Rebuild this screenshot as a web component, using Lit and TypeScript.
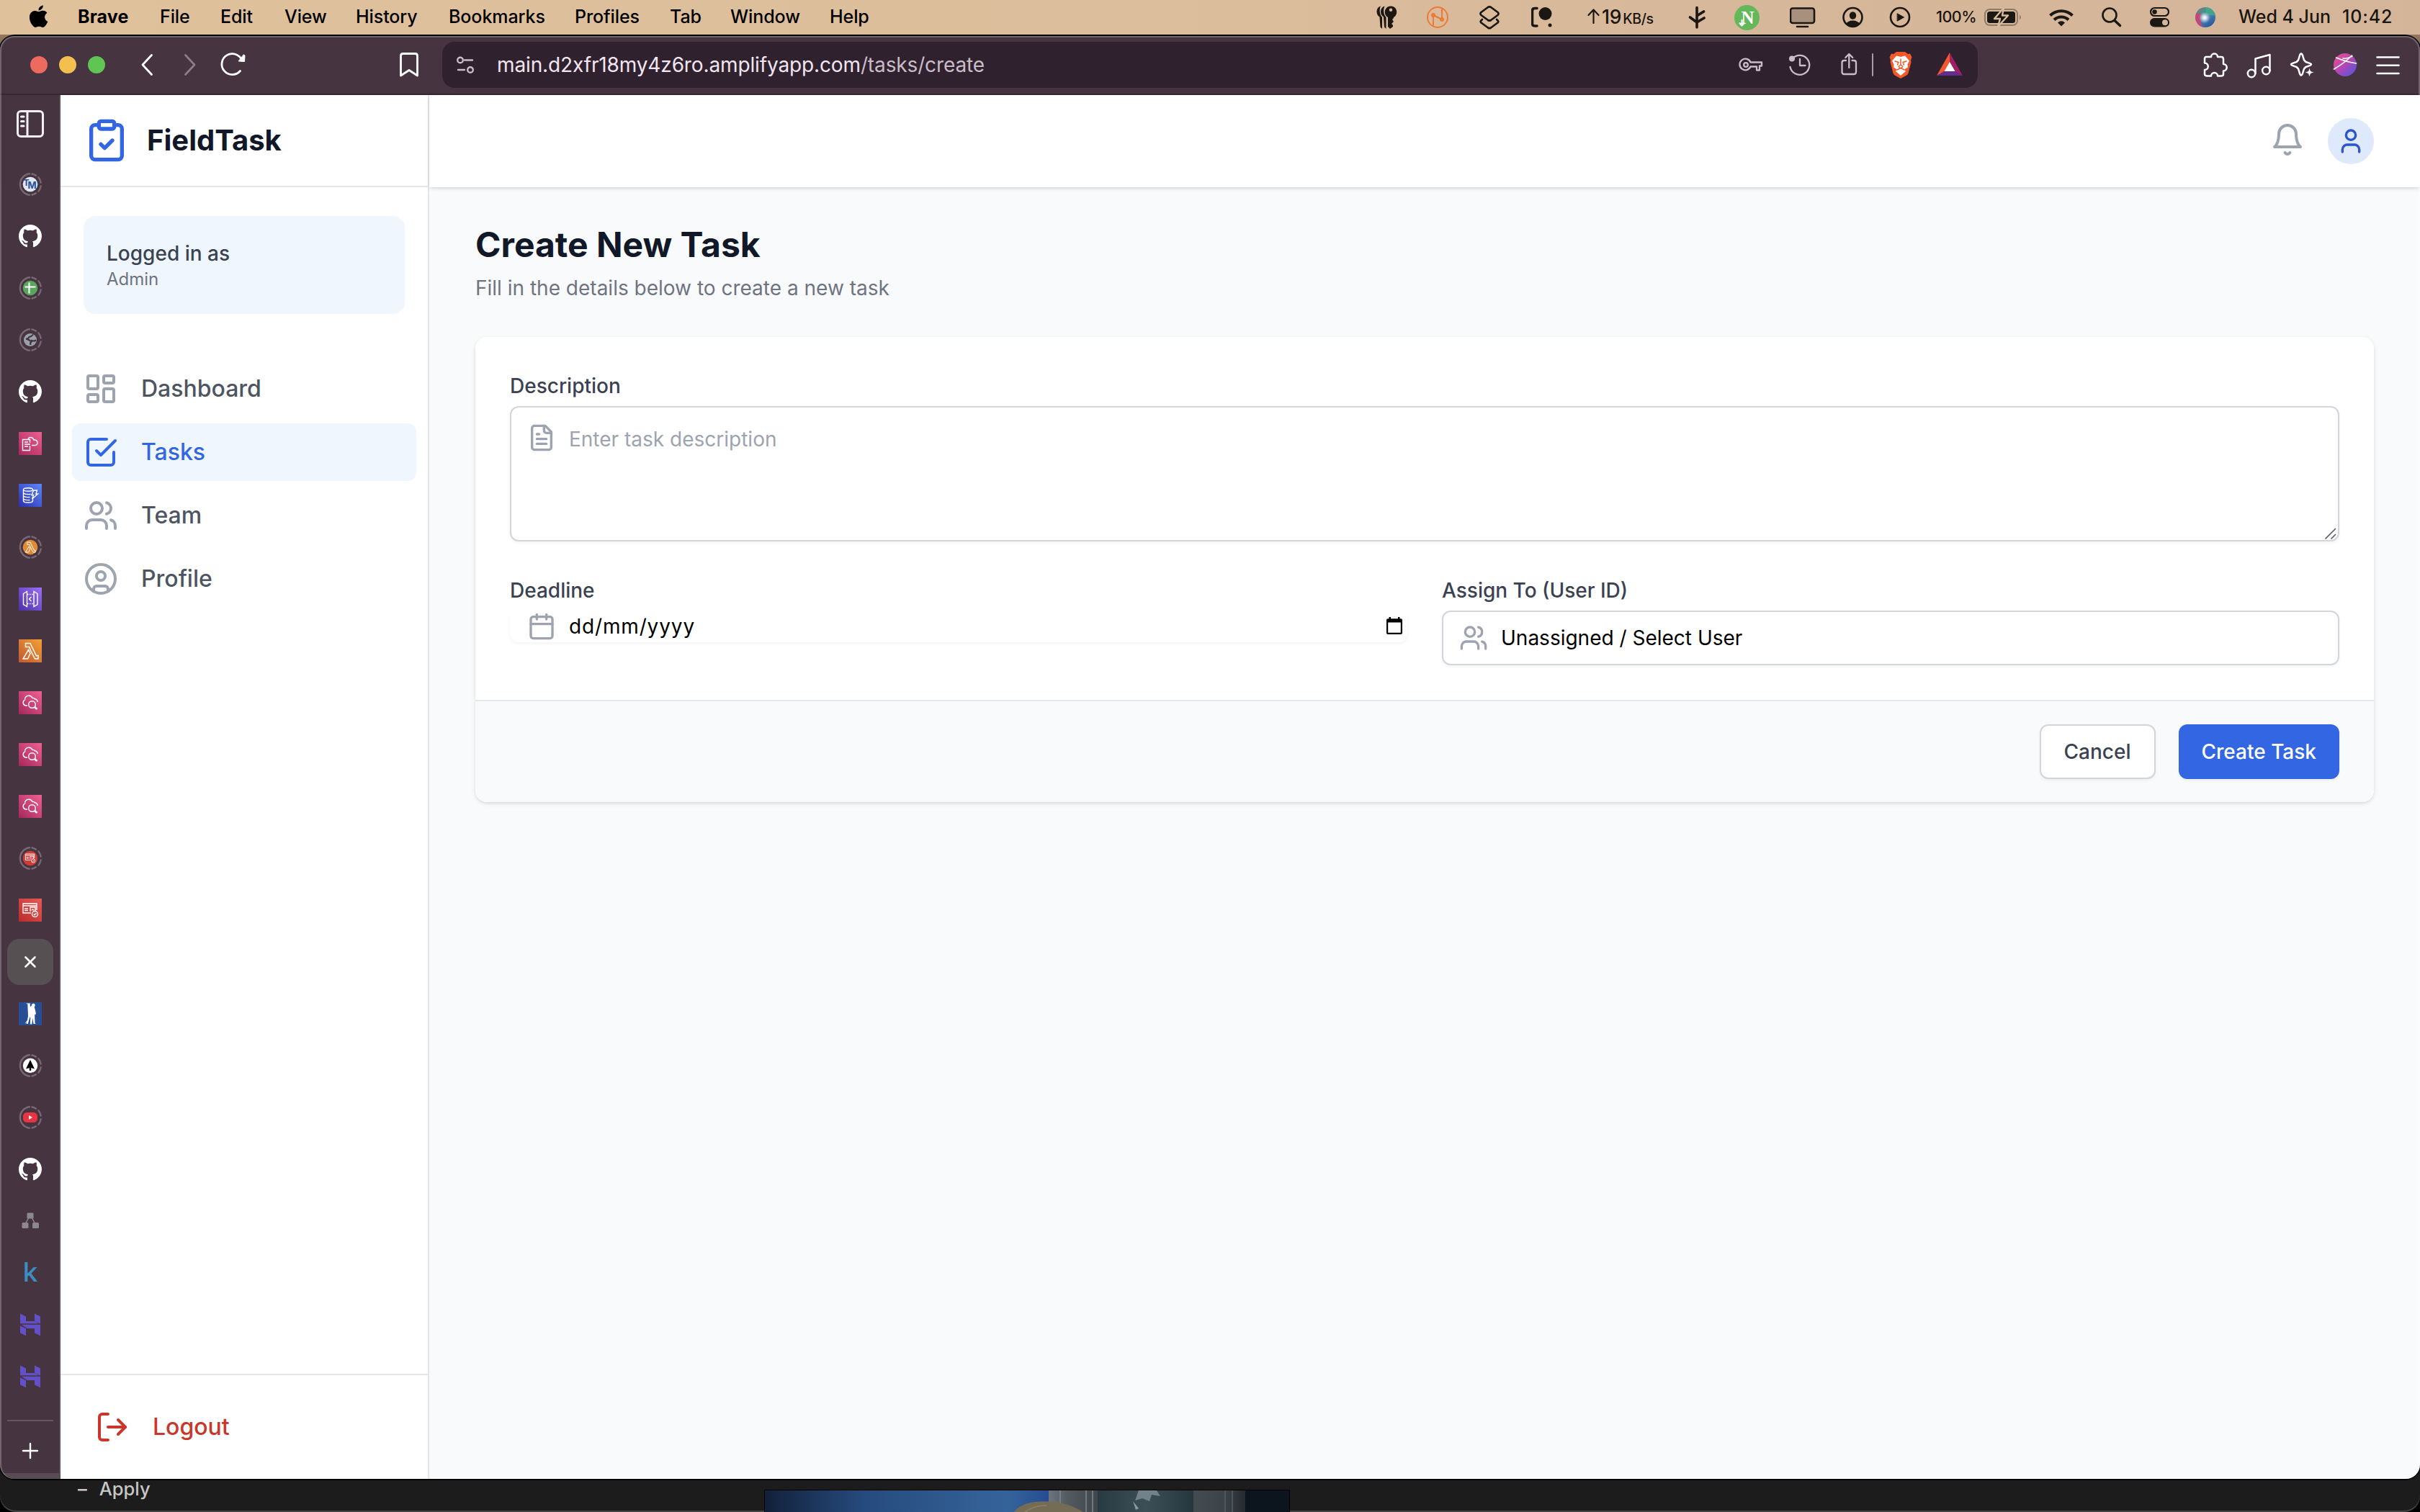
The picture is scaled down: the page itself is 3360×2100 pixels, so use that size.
import { LitElement, html, svg, css, nothing } from "lit";
import { customElement, property } from "lit/decorators.js";

/* ---------- Shared icon paths (24 x 24 outline set) ---------- */

const OUTLINE: Record<string, unknown> = {
  clipboard: svg`<rect width="8" height="4" x="8" y="2" rx="1" ry="1"/><path d="M16 4h2a2 2 0 0 1 2 2v14a2 2 0 0 1-2 2H6a2 2 0 0 1-2-2V6a2 2 0 0 1 2-2h2"/><path d="m9 14 2 2 4-4"/>`,
  dashboard: svg`<rect width="7" height="9" x="3" y="3" rx="1"/><rect width="7" height="5" x="14" y="3" rx="1"/><rect width="7" height="9" x="14" y="12" rx="1"/><rect width="7" height="5" x="3" y="16" rx="1"/>`,
  tasks: svg`<path d="m9 11 3 3L22 4"/><path d="M21 12v7a2 2 0 0 1-2 2H5a2 2 0 0 1-2-2V5a2 2 0 0 1 2-2h11"/>`,
  users: svg`<path d="M16 21v-2a4 4 0 0 0-4-4H6a4 4 0 0 0-4 4v2"/><circle cx="9" cy="7" r="4"/><path d="M22 21v-2a4 4 0 0 0-3-3.87"/><path d="M16 3.13a4 4 0 0 1 0 7.75"/>`,
  profile: svg`<circle cx="12" cy="12" r="10"/><circle cx="12" cy="10" r="3"/><path d="M7 20.662V19a2 2 0 0 1 2-2h6a2 2 0 0 1 2 2v1.662"/>`,
  logout: svg`<path d="M9 21H5a2 2 0 0 1-2-2V5a2 2 0 0 1 2-2h4"/><path d="m16 17 5-5-5-5"/><path d="M21 12H9"/>`,
  bell: svg`<path d="M6 8a6 6 0 0 1 12 0c0 7 3 9 3 9H3s3-2 3-9"/><path d="M10.3 21a1.94 1.94 0 0 0 3.4 0"/>`,
  user: svg`<path d="M19 21v-2a4 4 0 0 0-4-4H9a4 4 0 0 0-4 4v2"/><circle cx="12" cy="7" r="4"/>`,
  file: svg`<path d="M15 2H6a2 2 0 0 0-2 2v16a2 2 0 0 0 2 2h12a2 2 0 0 0 2-2V7Z"/><path d="M14 2v4a2 2 0 0 0 2 2h4"/><path d="M10 9H8"/><path d="M16 13H8"/><path d="M16 17H8"/>`,
  calendar: svg`<path d="M8 2v4"/><path d="M16 2v4"/><rect width="18" height="18" x="3" y="4" rx="2"/><path d="M3 10h18"/>`,
};

@customElement("line-icon")
export class LineIcon extends LitElement {
  @property() name = "";
  static styles = css`
    :host { display: block; flex: none; width: 48px; height: 48px; }
    svg { display: block; width: 100%; height: 100%; }
  `;
  render() {
    return html`<svg viewBox="0 0 24 24" fill="none" stroke="currentColor" stroke-width="2" stroke-linecap="round" stroke-linejoin="round">${OUTLINE[this.name] ?? nothing}</svg>`;
  }
}

/* ---------- macOS menu bar ---------- */

const MENUS = ["File", "Edit", "View", "History", "Bookmarks", "Profiles", "Tab", "Window", "Help"];

const glyph = (x: number, w: number, body: unknown) =>
  html`<svg width=${w} height="48" viewBox="${x} 0 ${w} 48" fill="none" stroke-linecap="round" stroke-linejoin="round">${body}</svg>`;

@customElement("menu-bar")
export class MenuBar extends LitElement {
  static styles = css`
    :host {
      display: flex; height: 48px; justify-content: space-between; overflow: hidden;
      background: linear-gradient(90deg, #dfc19c 0, #dcbe9c 45%, #d6b79a 75%, #d5b599 100%);
      font: 500 25px/46px Inter, "Liberation Sans", sans-serif; color: #1b1510; white-space: pre;
    }
    svg { display: block; }
    .menus, .status { display: grid; align-items: center; height: 48px; }
    .menus { padding-left: 41px; grid-template-columns: 67px 114px 84px 89px 99px 129px 175px 132px 84px 138px auto; color: #000; }
    .menus span { font-weight: 450; letter-spacing: -0.08px; height: 48px; }
    .menus .app { font-weight: 700; letter-spacing: 0.1px; }
    .status { grid-template-columns: 70px 71px 74px 78px 140px 64px 77px 72px 66px 65px 67px 89px 73px 67px 63px 61px 144px 108px; }
    .status span { height: 48px; }
    .net { display: flex; align-items: baseline; }
    .net .unit { font-size: 19.5px; letter-spacing: -0.4px; margin-left: 2px; }
    .net .num { font-size: 26.5px; letter-spacing: -0.2px; }
    .pct { font-size: 21.5px; letter-spacing: -0.5px; }
    .date { letter-spacing: -0.02px; }
    .time { letter-spacing: 0.85px; }
  `;
  render() {
    const k = "#1b1712";
    return html`
      <div class="menus">
        ${glyph(41, 28, svg`<g transform="translate(38 7.5) scale(1.3 1.27)" fill="#000"><path d="M12.152 6.896c-.948 0-2.415-1.078-3.96-1.04-2.04.027-3.91 1.183-4.961 3.014-2.117 3.675-.546 9.103 1.519 12.09 1.013 1.454 2.208 3.09 3.792 3.039 1.52-.065 2.09-.987 3.935-.987 1.831 0 2.35.987 3.96.948 1.637-.026 2.676-1.48 3.676-2.948 1.156-1.688 1.636-3.325 1.662-3.415-.039-.013-3.182-1.221-3.22-4.857-.026-3.04 2.48-4.494 2.597-4.559-1.429-2.09-3.623-2.324-4.39-2.376-2-.156-3.675 1.09-4.61 1.09zM15.53 3.83c.843-1.012 1.4-2.427 1.245-3.83-1.207.052-2.662.805-3.532 1.818-.78.896-1.454 2.338-1.273 3.714 1.338.104 2.715-.688 3.559-1.701"/></g>`)}
        <span class="app">Brave</span>
        ${MENUS.map((m) => html`<span>${m}</span>`)}
      </div>
      <div class="status">
        ${glyph(1911, 30, svg`
          <g fill=${k}>
            <path d="M1917 8.500c-7 2-7 12-1.500 15l1 14 2.500 2.500V24c-4-4-4-11.500-2-15.500z"/>
            <path d="M1922.500 8.500c-7 2-7 12-1.500 15l1 14 2.500 2.500V24c-4-4-4-11.500-2-15.500z"/>
            <path fill-rule="evenodd" d="M1931 8.500c-9 0-11 12-4 15.500v13l3 3 4-3v-2l-2-2 3-3-2-3 2-2v-1c7-4 5-15.500-4-15.500zm0 3a2 2 0 1 1 0 4.500 2 2 0 0 1 0-4.500z"/>
          </g>`)}
        ${glyph(1981, 31, svg`
          <g stroke="#ee7a38" stroke-width="2"><circle cx="1996" cy="24" r="14"/><path d="M1990 21v14M2002 27V13M1990 21l12 6"/></g>
          <circle cx="1990" cy="21" r="3" fill="#ee7a38"/><circle cx="2002" cy="27" r="3" fill="#ee7a38"/>`)}
        ${glyph(2052, 32, svg`<g stroke=${k} stroke-width="2.700"><path d="M2066 10q2-1.300 4 0l9.500 7q2 2 0 4l-9.500 7q-2 1.300-4 0l-9.500-7q-2-2 0-4z"/><path d="M2058 27l-1.500 1.500q-1.500 1.500 0 3l9.500 7q2 1.300 4 0l9.500-7q1.500-1.500 0-3L2078 27"/></g>`)}
        ${glyph(2126, 30, svg`<path d="M2134 11.500h-3q-3.500 0-3.500 3.500v18q0 3 3.500 3h3" stroke=${k} stroke-width="3.500"/><circle cx="2145.500" cy="19" r="9" fill=${k}/><circle cx="2152" cy="35" r="2.500" fill=${k}/>`)}
        <span class="net">
          <svg width="20" height="22" viewBox="0 0 20 22" fill="none" stroke=${k} stroke-width="2.200" stroke-linecap="round" stroke-linejoin="round"><path d="M8.500 21V3M1.500 10l7-7.500 7 7.500"/></svg><span class="num">19</span><span class="unit">KB/s</span>
        </span>
        ${glyph(2344, 26, svg`<path d="M2356 10.500V38M2346.500 24l9.500 7 10-6M2356 22l9.500-6" stroke=${k} stroke-width="3.600"/>`)}
        ${glyph(2408, 36, svg`<circle cx="2425.500" cy="24.500" r="17.500" fill="#64b85a"/><text x="2426.500" y="32.500" text-anchor="middle" font-family="Liberation Serif, serif" font-weight="700" font-size="25" fill="#fff">N</text><path d="M2418.500 28v7m-3-2.800 3 3.300 3-3.300" stroke="#fff" stroke-width="2.200"/>`)}
        ${glyph(2485, 36, svg`<rect x="2486" y="11.500" width="33" height="20.500" rx="3" fill="#a8917c" stroke=${k} stroke-width="2.600"/><path d="M2495 37h15" stroke=${k} stroke-width="2.600"/>`)}
        ${glyph(2557, 32, svg`<circle cx="2572.500" cy="24" r="13" stroke=${k} stroke-width="2.600"/><ellipse cx="2572.500" cy="21.500" rx="4.700" ry="5.300" fill=${k}/><path d="M2563 33q3-4.500 9.500-4.500T2582 33q-4 4-9.500 4t-9.500-4z" fill=${k}/>`)}
        ${glyph(2623, 32, svg`<circle cx="2638" cy="24" r="13" stroke=${k} stroke-width="2.600"/><path d="M2634.500 19l9 5-9 5z" fill=${k} stroke=${k}/>`)}
        <span class="pct">100%</span>
        ${glyph(2755, 54, svg`
          <rect x="2756" y="13" width="45" height="22" rx="6.500" stroke="#8d7a67" stroke-width="2"/><path d="M2804 20.500q4 3.500 0 7z" fill="#8d7a67"/>
          <rect x="2759" y="16" width="39" height="16" rx="3.500" fill=${k}/>
          <path d="M2782 11l-13 15h8l-3 11 14-15.500h-8z" fill=${k} stroke="#d8ba9c" stroke-width="2.400"/>`)}
        ${glyph(2844, 38, svg`<g stroke=${k} stroke-width="4" stroke-linecap="butt"><path d="M2846.500 21.500a22.500 22.500 0 0 1 31 0"/><path d="M2852 27.500a14.500 14.500 0 0 1 20 0"/></g><path d="M2857 31.500q5-4.500 10 0l-5 5z" fill=${k}/>`)}
        ${glyph(2917, 30, svg`<circle cx="2929" cy="21" r="9.500" stroke=${k} stroke-width="2.600"/><path d="M2936 28.500l7.500 7" stroke=${k} stroke-width="3.600"/>`)}
        ${glyph(2984, 30, svg`<rect x="2986" y="11" width="25" height="11" rx="5.500" stroke=${k} stroke-width="2.200"/><circle cx="2991.500" cy="16.500" r="3.200" fill=${k}/><rect x="2985" y="25" width="27" height="12.500" rx="6.250" fill=${k}/><circle cx="3006" cy="31.200" r="4" fill="#d6b79a"/>`)}
        ${glyph(3047, 30, svg`
          <defs>
            <linearGradient id="orb" x1="0" y1="0" x2=".7" y2="1"><stop offset="0" stop-color="#9c5f86"/><stop offset=".3" stop-color="#4f8f86"/><stop offset=".6" stop-color="#4a7fae"/><stop offset="1" stop-color="#2757a0"/></linearGradient>
            <radialGradient id="core"><stop offset="0" stop-color="#fff"/><stop offset=".3" stop-color="#fff" stop-opacity=".8"/><stop offset="1" stop-color="#cfe0ff" stop-opacity="0"/></radialGradient>
          </defs>
          <circle cx="3062" cy="24" r="14" fill="url(#orb)"/><path d="M3049 19a14 14 0 0 0 9 18.500q-5-9-1-19z" fill="#d93a72" opacity=".85"/><path d="M3062 10a14 14 0 0 1 13.500 11q-7 1-12-1z" fill="#3fae86" opacity=".8"/><circle cx="3061" cy="24.500" r="8" fill="url(#core)"/>`)}
        <span class="date">Wed 4 Jun</span>
        <span class="time">10:42</span>
      </div>`;
  }
}

/* ---------- Browser toolbar ---------- */

const tool = (x: number, w: number, body: unknown) =>
  html`<svg width=${w} height="48" viewBox="${x} 66 ${w} 48" fill="none" stroke="currentColor" stroke-width="2.800" stroke-linecap="round" stroke-linejoin="round">${body}</svg>`;

@customElement("browser-toolbar")
export class BrowserToolbar extends LitElement {
  static styles = css`
    :host {
      display: flex; align-items: center; height: 80px; flex: none; color: #fff;
      background: #463441; border-bottom: 2px solid #33282f;
      font: 400 28px/64px Inter, "Liberation Sans", sans-serif;
    }
    svg { display: block; flex: none; }
    .lights { display: flex; gap: 16px; padding-left: 42px; }
    .light { width: 24px; height: 24px; border-radius: 50%; }
    .close { background: #ed6a5e; }
    .min { background: #f5bf4f; }
    .max { background: #61c554; }
    .nav { display: grid; grid-template-columns: 60px 50px 245px 65px; padding-left: 48px; }
    .fwd { color: #8b7e88; }
    .url { display: flex; align-items: center; width: 2132px; height: 64px; border-radius: 17px; background: #30212f; color: #cabdc8; box-sizing: border-box; padding-left: 18px; }
    .text { flex: 1; padding-left: 30px; color: #c9bcc7; letter-spacing: -0.13px; }
    .host { color: #f1e6ef; }
    .tools { display: grid; grid-template-columns: 69px 71px 42px 24px 65px 61px; }
    .right { display: grid; grid-template-columns: 60px 60px 60px 60px 36px; padding-left: 312px; }
  `;
  render() {
    return html`
      <div class="lights"><i class="light close"></i><i class="light min"></i><i class="light max"></i></div>
      <div class="nav">
        ${tool(194, 20, svg`<path d="M210.500 76.500L198 90l12.500 13.500"/>`)}
        <span class="fwd">${tool(254, 20, svg`<path d="M257.500 76.500L270 90l-12.500 13.500"/>`)}</span>
        ${tool(304, 40, svg`<path d="M336 84a14.500 14.500 0 1 0-2.500 14.500"/><path d="M331.500 85l8 .5.5-8.500a5 5 0 0 0-1.500-1z" fill="#fff" stroke-width="1"/>`)}
        ${tool(549, 36, svg`<path d="M556.500 77.500q0-3 3-3h17q3 0 3 3V105l-11.500-7.500-11.500 7.500z"/>`)}
      </div>
      <div class="url">
        ${tool(632, 28, svg`<g stroke-width="2.400"><circle cx="639" cy="83.500" r="3.800"/><path d="M645 83.500h11M636 97h9"/><circle cx="653" cy="97" r="3.800"/></g>`)}
        <div class="text"><span class="host">main.d2xfr18my4z6ro.amplifyapp.com</span>/tasks/create</div>
        <div class="tools">
          ${tool(2413, 35, svg`<g stroke-width="2.300"><path d="M2429.500 86.500h15.500v5h-3v6h-4v-5h-8.500a7.800 7.800 0 1 1 0-6z"/><circle cx="2423" cy="90" r="2.800"/></g>`)}
          ${tool(2482, 34, svg`<g stroke-width="2.300"><path d="M2484.500 93a13.500 13.500 0 1 0 3.500-12"/><path d="M2498 82v9h7.500"/></g><circle cx="2487" cy="81.500" r="4" fill="currentColor" stroke="none"/>`)}
          ${tool(2553, 28, svg`<g stroke-width="2.300"><path d="M2562 84h-2.500q-3 0-3 3v13q0 3 3 3h13.500q3 0 3-3V87q0-3-3-3h-2.500"/><path d="M2566.300 94V75.500m-5 4.500 5-5 5 5"/></g>`)}
          ${tool(2595, 8, svg`<path d="M2599 75v30" stroke="#a99ca7" stroke-width="2"/>`)}
          ${tool(2619, 38, svg`
            <g stroke="none"><path d="M2632 72h12l4 3 3-.5 2.500 5-1.500 4 .5 3-4 15q-.500 2-3 3.500l-7.500 4-7.500-4q-2.500-1.500-3-3.500l-4-15 .5-3-1.500-4 2.500-5 3 .5z" fill="#f1592a"/>
            <path d="M2638 79l6-1.500 6 7-2.500 5 .5 4-5 3 2 2.500-7 6-7-6 2-2.500-5-3 .5-4-2.500-5 6-7z" fill="#fff"/>
            <path d="M2638 82v8l-3 2.500 3 2.500 3-2.500-3-2.500M2630 85l5 1.500-1.500 3.500M2646 85l-5 1.500 1.500 3.500M2633 97l5-2.500 5 2.500" fill="none" stroke="#f1592a" stroke-width="1.500"/></g>`)}
          ${tool(2684, 42, svg`<g stroke="none"><path d="M2706 73v16l-8 11-10 5z" fill="#f1582b"/><path d="M2706 73v16l8 11 10 5z" fill="#9e1f63"/><path d="M2688 105l10-6h16l10 6z" fill="#662d91"/><path d="M2706 86l7.500 13h-15z" fill="#fff"/></g>`)}
        </div>
      </div>
      <div class="right">
        ${tool(3058, 38, svg`<path d="M3062.500 79h7.500a4.500 4.500 0 0 1 9 0h5q3 0 3 3v7a4.500 4.500 0 0 1 0 9.500v4.500q0 2.500-3 2.500h-5a4.500 4.500 0 0 0-9 0h-5q-4 0-4-2.500v-6a4.500 4.500 0 0 0 0-9.500v-6q0-2 1.500-2.500z" stroke-width="2.500"/>`)}
        ${tool(3118, 38, svg`<g stroke-width="2.500"><path d="M3131.500 102V81.500l20-5.500v22"/><circle cx="3126" cy="102" r="5.200"/><circle cx="3146.300" cy="98" r="5.200"/></g>`)}
        ${tool(3178, 38, svg`<path d="M3195 74.500q1.200 0 2 2.500l2 6.500 2.500 2.500 6 2.200q3 1.300 0 2.600l-6 2.200-2.500 2.500-2 6.500q-.8 2.500-2 2.500t-2-2.500l-2-6.500-2.500-2.500-6-2.200q-3-1.300 0-2.600l6-2.200 2.500-2.500 2-6.500q.8-2.500 2-2.500z" stroke-width="2.500"/><path d="M3206.500 94l1.800 4.700 5 1.800-5 1.800-1.800 4.700-1.800-4.700-5-1.800 5-1.800z" fill="#fff" stroke="#463441" stroke-width=".8"/>`)}
        ${tool(3238, 36, svg`<defs><linearGradient id="ball" x1="0" y1="0" x2="1" y2="1"><stop offset="0" stop-color="#f0508a"/><stop offset=".5" stop-color="#b446b8"/><stop offset="1" stop-color="#3f5be0"/></linearGradient></defs><circle cx="3256" cy="90" r="16" fill="url(#ball)" stroke="none"/><path d="M3243.500 80q14 6 28 8M3240.500 96q14-8 25-19M3253 81q6 1 13-3" stroke-width="1.600"/>`)}
        ${tool(3298, 36, svg`<path d="M3300.500 79.500h30M3300.500 90.700h30M3300.500 102h30" stroke-width="2.600"/>`)}
      </div>`;
  }
}

/* ---------- Vertical tab strip ---------- */

const ring = svg`<g stroke="#776872" stroke-width="2.400" fill="none" stroke-linecap="round"><path d="M15 1.300a14.800 14.800 0 0 0 0 29.400"/><path d="M18.500 1.500a14.800 14.800 0 0 1 5.500 2.200M27.500 6.500a14.800 14.800 0 0 1 3.200 7M30.700 18.500a14.800 14.800 0 0 1-3.200 7M24 28.300a14.800 14.800 0 0 1-5.500 2.200"/></g>`;
const github = svg`<path transform="scale(2)" fill="#fff" d="M8 0C3.580 0 0 3.580 0 8c0 3.540 2.290 6.530 5.470 7.590.4.070.55-.17.55-.38 0-.19-.01-.82-.01-1.490-2.010.37-2.530-.49-2.690-.94-.09-.23-.48-.94-.82-1.130-.28-.15-.68-.52-.01-.53.63-.01 1.080.58 1.230.82.72 1.210 1.870.87 2.330.66.07-.52.28-.87.51-1.070-1.780-.2-3.640-.89-3.640-3.950 0-.87.31-1.590.82-2.150-.08-.2-.36-1.020.08-2.120 0 0 .67-.21 2.200.82.64-.18 1.320-.27 2-.27s1.360.09 2 .27c1.530-1.040 2.200-.82 2.200-.82.44 1.100.16 1.920.08 2.120.51.56.82 1.270.82 2.150 0 3.070-1.870 3.750-3.650 3.950.29.25.54.73.54 1.480 0 1.070-.01 1.930-.01 2.200 0 .21.15.46.55.38A8.010 8.010 0 0 0 16 8c0-4.420-3.580-8-8-8z"/>`;
const lambda = svg`<path d="M9.500 5.500h6.500l8.500 17.500 1-.5h1.500V27h-4.500L16.500 15.500 14.500 10.500h-5zM13.500 14.500l2.500 5L12.500 27H6z" fill="none" stroke="#fff" stroke-width="1.500"/>`;
const watch = svg`<g fill="none" stroke="#fff" stroke-width="1.400"><path d="M12 20H9.500A4.300 4.300 0 0 1 8.500 12a5.500 5.500 0 0 1 10.500-2.500 3 3 0 0 1 3 1q3.500.5 4.500 4.500"/><circle cx="18.500" cy="18.500" r="4.800"/><path d="M22 22l3.500 3" stroke-width="2.600"/></g>`;
const cert = svg`<g fill="none" stroke="#fff" stroke-width="1.400"><path d="M17 20H6V7h19v9M6 10h19M8 14h5M8 16.500h5"/><path d="M16 18v-6h7v5M18 16.500q1.500-3 3 0"/><circle cx="22.500" cy="21.500" r="4"/><path d="M20.800 21.500l1.300 1.300 2.300-2.500"/></g>`;
const hostLogo = svg`<g fill="#6350c8"><path d="M2 .500L10 4.500V11h11.500l6.500 3.300H2z"/><path d="M22 .500l8 4V14.500l-8-3.200z"/><path d="M4 15.800h26V31.300l-8-4V21H11.500z"/><path d="M2 17.500l8 3.500v10.300l-8-4z"/></g>`;

const TILES: Record<string, [string, string, unknown]> = {
  pink: ["#a5275c", "#f06090", svg`<g fill="none" stroke="#fff" stroke-width="1.400"><path d="M15.500 19v6.500H5.500V10.500h10V15M8 14h5M8 17h8M8 20h5"/><path d="M13 10q1-3 4-2.500 3 .5 4 3.500 5-.5 5 4.500-.5 3-3 3h-5"/></g>`],
  blue: ["#2b2fb0", "#5b87fa", svg`<g fill="none" stroke="#fff" stroke-width="1.400"><ellipse cx="13" cy="8" rx="6.500" ry="2.200"/><path d="M6.500 8v15.500q0 2.500 6.500 2.500t6.500-2.500v-3M6.500 12.500q1 2.500 10 2M6.500 16.500q1 2.500 9 2M6.500 20.500q1 2.500 9 2M20.500 9h5l-1.500 5h2.500L18.500 21l2-5.500H18z"/></g>`],
  purple: ["#4c2fa5", "#9a70f8", svg`<g fill="none" stroke="#fff" stroke-width="1.400"><path d="M6.500 8.500l5-3v21l-5-3zM26 8.500l-5-3v21l5-3zM17.500 13l-3 3 3 3"/><path d="M12 9.500h9M12 22.500h9" stroke-dasharray="1.500 1.500"/></g>`],
  orange: ["#c2592f", "#f4a035", lambda],
  watch: ["#a5275c", "#f06090", watch],
  red: ["#b92c2c", "#e85a55", cert],
};

const SMALL: Record<string, unknown> = {
  tm: svg`<circle cx="16" cy="16" r="10.300" fill="#dfe7f7"/><text x="10.500" y="17.500" text-anchor="middle" font-family="Inter, sans-serif" font-weight="700" font-size="12" fill="#2a4f96">T</text><text x="18.500" y="22" text-anchor="middle" font-family="Inter, sans-serif" font-weight="700" font-size="13" fill="#2a4f96">M</text>`,
  plus: svg`<circle cx="16" cy="16" r="10.300" fill="#57a65b"/><path d="M8.500 14.500h15M14.500 8.500v15" stroke="#fff" stroke-width="2.200"/>`,
  globe: svg`<circle cx="16" cy="16" r="9" fill="#9aa1ab"/><path d="M20 8.500q-2 3-5.500 3.500-1 3-4.500 2.500 5 1.500 7.500 4-2 1.500-1 4.500M17 16.500q4 2 7 0" stroke="#463441" stroke-width="2.200" fill="none"/>`,
  lambda: svg`<circle cx="16" cy="16" r="10.300" fill="#e08a34"/><g transform="translate(5.500 5.500) scale(.65)">${lambda}</g>`,
  cert: svg`<circle cx="16" cy="16" r="10.300" fill="#cf3c38"/><g transform="translate(5.500 5.500) scale(.65)">${cert}</g>`,
  tree: svg`<circle cx="16" cy="16" r="10.200" fill="#fff"/><path d="M16 8l6 12.500-4.800-1.300V23h-2.400v-3.800L10 20.500z" fill="#000"/>`,
  video: svg`<rect x="6" y="9" width="20" height="14" rx="5.500" fill="#e9343f"/><path d="M14 13l5 3-5 3z" fill="#fff"/>`,
};

const TABS = [
  "s:tm", "github", "s:plus", "s:globe", "github", "t:pink", "t:blue", "s:lambda", "t:purple", "t:orange",
  "t:watch", "t:watch", "t:watch", "s:cert", "t:red", "active", "people", "s:tree", "s:video", "github",
  "nodes", "k", "host", "host",
];

@customElement("tab-strip")
export class TabStrip extends LitElement {
  static styles = css`
    :host {
      display: flex; flex-direction: column; align-items: center; box-sizing: border-box;
      width: 84px; flex: none; background: #463441; border-right: 2px solid #574b54;
      border-bottom: 8px solid #574b54; color: #fff;
    }
    svg { display: block; overflow: visible; flex: none; }
    .panel { padding: 20px 0 32px 2px; }
    .tabs { display: flex; flex-direction: column; gap: 8px; padding-left: 2px; }
    .tab { width: 64px; height: 64px; border-radius: 17px; display: flex; align-items: center; justify-content: center; }
    .active { background: #575053; }
    .rule { width: 64px; height: 2px; flex: none; background: #62565f; margin: 28px 0 29px 2px; }
    .add { padding-left: 2px; }
    .letter { width: 32px; height: 64px; text-align: center; font: 500 37px/62px Inter, "Liberation Sans", sans-serif; color: #3d8ec0; }
  `;
  private icon(id: string) {
    const [kind, name] = id.split(":");
    if (kind === "t") {
      const [a, b, body] = TILES[name];
      return svg`<defs><linearGradient id=${`tile-${name}`} x1="0" y1="1" x2="1" y2="0"><stop offset="0" stop-color=${a}/><stop offset="1" stop-color=${b}/></linearGradient></defs><rect width="32" height="32" fill=${`url(#tile-${name})`}/>${body}`;
    }
    if (kind === "s") return svg`${ring}${SMALL[name]}`;
    switch (kind) {
      case "github": return github;
      case "active": return svg`<path d="M9.500 9.500l13 13M22.500 9.500l-13 13" stroke="#fff" stroke-width="2.600" stroke-linecap="round"/>`;
      case "people": return svg`<rect width="32" height="32" fill="#264f95"/><path d="M10.500 1.500H16v.8h-.5l.5 4 2-1.500a2.400 2.400 0 1 1 4.500.2l-.8 2 1.300 4 1 5.500-1.800.8.3 11 1 1.700h-3l-1.200-8-1 8.500h-2.500l.5-8.500-.5-2-1.500 4.500-1.500 5.500h-2.300l.5-2.500-2 2H8.500l3.500-4.500 1-6L12.300 2.300h-1.800z" fill="#fff"/>`;
      case "nodes": return svg`<g fill="#8b898b"><rect x="11.500" y="4.500" width="9" height="8" rx="1.200"/><rect x="4.500" y="18" width="9" height="8" rx="1.500"/><rect x="19" y="18" width="9" height="8" rx="1.500"/><path d="M14 11l-4.500 8M18 11l4.500 8" stroke="#8b898b" stroke-width="1.500"/></g>`;
      default: return hostLogo;
    }
  }
  render() {
    return html`
      <svg class="panel" width="40" height="40" viewBox="0 0 40 40" fill="none" stroke="#f4f0f3" stroke-width="3"><rect x="2.500" y="2.500" width="35" height="35" rx="4.500"/><path d="M16 3v34"/><path d="M7.500 10h3.500M7.500 16.500h3.500M7.500 23h3.500" stroke-linecap="round"/></svg>
      <div class="tabs">
        ${TABS.map((t) => html`<div class="tab ${t === "active" ? "active" : ""}">${t === "k"
          ? html`<span class="letter">k</span>`
          : html`<svg width="32" height="32" viewBox="0 0 32 32">${this.icon(t)}</svg>`}</div>`)}
      </div>
      <div class="rule"></div>
      <svg class="add" width="24" height="24" viewBox="0 0 24 24" stroke="#fff" stroke-width="2.400" stroke-linecap="round"><path d="M12 2v20M2 12h20"/></svg>`;
  }
}

/* ---------- FieldTask application ---------- */

const NAV = [
  { icon: "dashboard", label: "Dashboard" },
  { icon: "tasks", label: "Tasks", active: true },
  { icon: "users", label: "Team" },
  { icon: "profile", label: "Profile" },
];

@customElement("field-task")
export class FieldTask extends LitElement {
  static styles = css`
    :host {
      display: flex; flex: 1; min-width: 0; background: #f9fafc; color: #111827;
      font: 400 28px/40px Inter, "Liberation Sans", sans-serif;
    }
    * { box-sizing: border-box; }
    .side { width: 512px; flex: none; display: flex; flex-direction: column; background: #fff; border-right: 2px solid #e4e6ea; }
    .brand { height: 128px; flex: none; display: flex; align-items: center; gap: 24px; padding: 0 32px; border-bottom: 2px solid #e4e6ea; font-size: 40px; font-weight: 700; }
    .brand line-icon { width: 64px; height: 64px; color: #3266e3; }
    .who { margin: 40px 32px 64px; padding: 32px; height: 136px; border-radius: 16px; background: #eff6fe; }
    .who .a { font-weight: 500; color: #3a4252; }
    .who .b { font-size: 24px; line-height: 32px; color: #6e7481; }
    .nav { display: flex; flex-direction: column; gap: 8px; padding: 0 16px; flex: 1; }
    .item { height: 80px; display: flex; align-items: center; gap: 32px; padding: 0 16px; border-radius: 12px; font-size: 32px; font-weight: 500; color: #4d5563; }
    .item line-icon { color: #9da4af; }
    .item.active { background: #eff6fe; color: #3266e3; }
    .item.active line-icon { color: #3266e3; }
    .foot { height: 146px; flex: none; border-top: 2px solid #e4e6ea; padding: 32px; }
    .foot .item, .foot line-icon { color: #c9372c; }
    .main { flex: 1; min-width: 0; display: flex; flex-direction: column; }
    .top { height: 128px; flex: none; background: #fff; display: flex; justify-content: flex-end; align-items: center; gap: 32px; padding: 0 64px; box-shadow: 0 2px 6px rgba(0,0,0,.1), 0 2px 4px -2px rgba(0,0,0,.1); }
    .top .bell { color: #9da4af; margin-bottom: 4px; }
    .avatar { width: 64px; height: 64px; border-radius: 50%; background: #dee9fc; display: flex; align-items: center; justify-content: center; color: #2c54cf; }
    .avatar line-icon, .ico { width: 40px; height: 40px; }
    .body { padding: 48px 64px; }
    h1 { margin: 0; font-size: 48px; line-height: 64px; font-weight: 700; }
    .sub { margin: 8px 0 48px; color: #6e7481; }
    .card { border-radius: 16px; background: #fff; box-shadow: 0 2px 6px rgba(0,0,0,.1), 0 2px 4px -2px rgba(0,0,0,.1); overflow: hidden; }
    .form { padding: 48px; display: grid; grid-template-columns: 1fr 1fr; gap: 48px; height: 504px; align-content: start; }
    .wide { grid-column: 1 / -1; }
    .label { font-weight: 500; color: #3a4252; margin-bottom: 8px; }
    .field { display: flex; align-items: center; gap: 18px; padding: 0 22px; border: 2px solid #d2d5dc; border-radius: 12px; background: #fff; color: #000; box-shadow: 0 2px 4px rgba(0,0,0,.05); }
    .field .ico { color: #9da4af; }
    .area { height: 188px; align-items: flex-start; padding: 22px 2px 1px 22px; color: #9da4af; }
    .area span { padding-top: 2px; flex: 1; }
    .grip { align-self: flex-end; display: block; flex: none; }
    .pick { height: 76px; }
    .date { height: 44px; border: 0; padding: 0 7px 0 24px; }
    .date span { flex: 1; letter-spacing: 0.85px; }
    .date svg { display: block; margin-bottom: 2px; }
    .actions { height: 142px; border-top: 2px solid #e4e6ea; background: #f9fafc; display: flex; justify-content: flex-end; gap: 32px; padding: 32px 48px; }
    .btn { height: 76px; border: 2px solid #d2d5dc; border-radius: 12px; background: #fff; padding: 16px 32px; font-weight: 500; color: #3a4252; box-shadow: 0 2px 4px rgba(0,0,0,.05); white-space: nowrap; }
    .primary { background: #3266e3; border: 0; padding: 18px 32px; color: #fff; }
  `;
  render() {
    return html`
      <aside class="side">
        <div class="brand"><line-icon name="clipboard"></line-icon>FieldTask</div>
        <div class="who"><div class="a">Logged in as</div><div class="b">Admin</div></div>
        <nav class="nav">
          ${NAV.map((n) => html`<div class="item ${n.active ? "active" : ""}"><line-icon name=${n.icon}></line-icon>${n.label}</div>`)}
        </nav>
        <div class="foot"><div class="item"><line-icon name="logout"></line-icon>Logout</div></div>
      </aside>
      <div class="main">
        <header class="top">
          <line-icon class="bell" name="bell"></line-icon>
          <div class="avatar"><line-icon name="user"></line-icon></div>
        </header>
        <main class="body">
          <h1>Create New Task</h1>
          <div class="sub">Fill in the details below to create a new task</div>
          <section class="card">
            <div class="form">
              <div class="wide">
                <div class="label">Description</div>
                <div class="field area">
                  <line-icon class="ico" name="file"></line-icon><span>Enter task description</span>
                  <svg class="grip" width="16" height="16" viewBox="0 0 16 16" stroke="#5c5c5c" stroke-width="1.600" fill="none"><path d="M.5 15.500L15 1M8.500 15.500L15 9"/></svg>
                </div>
              </div>
              <div>
                <div class="label">Deadline</div>
                <div class="field date">
                  <line-icon class="ico" name="calendar"></line-icon><span>dd/mm/yyyy</span>
                  <svg width="22" height="24" viewBox="0 0 22 24"><path fill-rule="evenodd" d="M3.500 0h2.500v2.200h10V0h2.500v2.200H20a2 2 0 0 1 2 2V22a2 2 0 0 1-2 2H2a2 2 0 0 1-2-2V4.200a2 2 0 0 1 2-2h1.500zM2.200 7.500v14.300h17.600V7.500z" fill="#000"/></svg>
                </div>
              </div>
              <div>
                <div class="label">Assign To (User ID)</div>
                <div class="field pick"><line-icon class="ico" name="users"></line-icon><span>Unassigned / Select User</span></div>
              </div>
            </div>
            <div class="actions"><div class="btn">Cancel</div><div class="btn primary">Create Task</div></div>
          </section>
        </main>
      </div>`;
  }
}

/* ---------- Desktop ---------- */

@customElement("app-root")
export class AppRoot extends LitElement {
  static styles = css`
    :host { display: flex; flex-direction: column; width: 3360px; height: 2100px; overflow: hidden; background: #000; }
    .stage { flex: 1; display: flex; flex-direction: column; background: linear-gradient(#94795f 0, #6b5747 30px, #000 60px); padding-top: 2px; }
    .window { height: 2004px; flex: none; display: flex; flex-direction: column; border-radius: 20px; overflow: hidden; background: #463441; }
    .shell { border-radius: 21px; box-shadow: 0 0 0 2px #000; position: relative; }
    .edge { position: absolute; inset: 0; border-radius: 20px; border: 2px solid rgba(255,255,255,.24); border-bottom: 0; pointer-events: none; }
    .row { display: flex; flex: 1; min-height: 0; }
    .behind {
      display: flex; justify-content: space-between; height: 44px; margin-top: -20px; padding-top: 22px;
      background: #1c1c1c; border-radius: 0 0 22px 22px; box-shadow: inset 0 -2px 0 #454545;
      font: 500 25.5px/24px Inter, "Liberation Sans", sans-serif; color: #c6c6c6;
    }
    .note { display: flex; width: 1061px; padding-left: 108px; box-sizing: border-box; gap: 17px; }
    .note b { font-weight: 500; }
    .photo { display: block; margin-top: 13px; }
    .pad { width: 1569px; }
  `;
  render() {
    return html`
      <menu-bar></menu-bar>
      <div class="stage">
        <div class="shell">
          <div class="window">
            <browser-toolbar></browser-toolbar>
            <div class="row"><tab-strip></tab-strip><field-task></field-task></div>
            <div class="edge"></div>
          </div>
        </div>
        <div class="behind">
          <div class="note"><b>–</b><span>Apply</span></div>
          <svg class="photo" width="730" height="32" viewBox="0 0 730 32">
            <defs>
              <linearGradient id="sky"><stop offset="0" stop-color="#12213a"/><stop offset=".35" stop-color="#264b7e"/><stop offset=".85" stop-color="#35649a"/><stop offset="1" stop-color="#264c92"/></linearGradient>
              <linearGradient id="glass"><stop offset="0" stop-color="#283a42"/><stop offset=".5" stop-color="#3b4f56"/><stop offset="1" stop-color="#26363f"/></linearGradient>
              <linearGradient id="frame"><stop offset="0" stop-color="#6c757d"/><stop offset=".4" stop-color="#525a60"/><stop offset="1" stop-color="#3f464c"/></linearGradient>
              <linearGradient id="jamb"><stop offset="0" stop-color="#444c52"/><stop offset=".6" stop-color="#3c444a"/><stop offset="1" stop-color="#23292f"/></linearGradient>
            </defs>
            <rect width="730" height="32" fill="#000"/>
            <rect x="1" y="1" width="395" height="31" fill="url(#sky)"/>
            <rect x="395" y="1" width="68" height="31" fill="url(#frame)"/>
            <path d="M411 1v31M447 1v31M456 1v31" stroke="#7e878d" stroke-width="1.500"/>
            <rect x="463" y="1" width="134" height="31" fill="url(#glass)"/>
            <path d="M520 1l25 0 5 8-12-2-3 9-10-4-10 3z" fill="#71828a"/><path d="M512 16l8 10-4 2z" fill="#8a9aa2"/>
            <rect x="596" y="1" width="72" height="31" fill="url(#jamb)"/><path d="M640 1v31M650 1v31" stroke="#555d63" stroke-width="1.500"/>
            <rect x="668" y="1" width="61" height="31" fill="#0c151d"/>
            <path d="M346 32q8-12 30-15 40-4 68 15z" fill="#756c56"/><path d="M362 31q12-9 30-9" stroke="#8a8064" stroke-width="1.500" fill="none"/>
          </svg>
          <div class="pad"></div>
        </div>
      </div>`;
  }
}
